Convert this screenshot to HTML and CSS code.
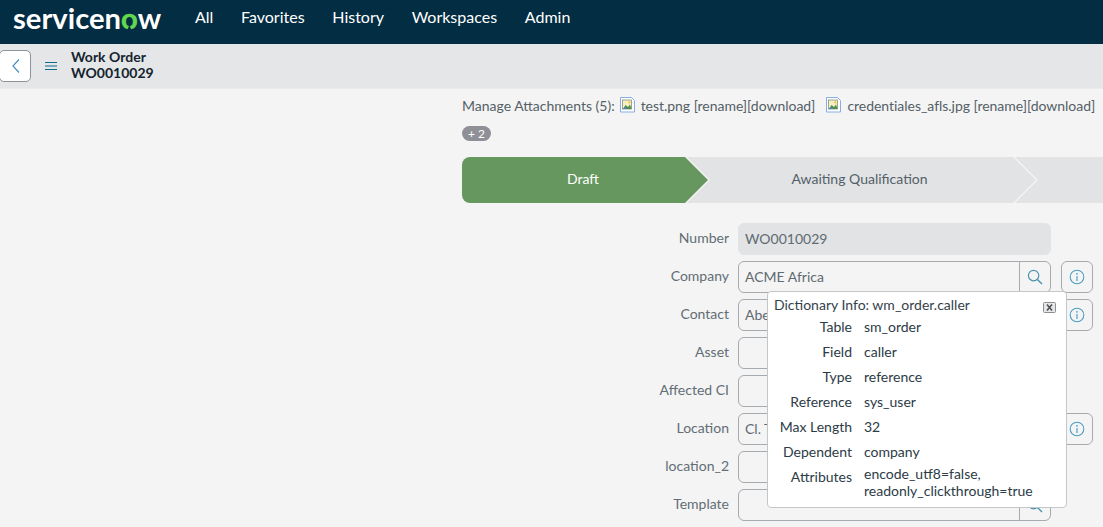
FILE: index.html
```html
<!DOCTYPE html>
<html lang="en">
<head>
<meta charset="utf-8">
<title>Work Order WO0010029</title>
<link rel="stylesheet" href="styles.css">
</head>
<body>
<svg class="defs" width="0" height="0" aria-hidden="true">
  <symbol id="i-search" viewBox="0 0 16 16"><circle cx="6.6" cy="6.6" r="5.2" fill="none" stroke="currentColor" stroke-width="1.2"/><path d="M10.4 10.4 15 15" fill="none" stroke="currentColor" stroke-width="1.4"/></symbol>
  <symbol id="i-info" viewBox="0 0 16 16"><circle cx="8" cy="8" r="6.8" fill="none" stroke="currentColor" stroke-width="1.1"/><path d="M8 7v5" stroke="currentColor" stroke-width="1.2"/><circle cx="8" cy="4.8" r=".9" fill="currentColor"/></symbol>
  <symbol id="i-file" viewBox="0 0 16 16"><path d="M.5.500h11l3 3v11.500h-14z" fill="#fff" stroke="#86aee4"/><rect x="2.500" y="3" width="9" height="9" fill="#f6efc4" stroke="#76806a" stroke-width=".7"/><path d="M3 12l2.500-4 2.500 2 2-2.500 1.500 4.500z" fill="#4f8f4a"/><path d="M3 12l2-2 3 2z" fill="#4f7fc0"/><circle cx="9.300" cy="5.300" r="1.100" fill="#e8c23c"/></symbol>
</svg>

<header class="topbar">
  <div class="logo">servicen<span class="logo-o">o</span>w</div>
  <nav class="nav">
    <span>All</span>
    <span>Favorites</span>
    <span>History</span>
    <span>Workspaces</span>
    <span>Admin</span>
  </nav>
</header>

<div class="subbar">
  <button class="back" type="button" aria-label="Back">
    <svg width="8" height="14" viewBox="0 0 8 14"><path d="M7 .5.900 7 7 13.500" fill="none" stroke="#3d8fbc" stroke-width="1.100"/></svg>
  </button>
  <svg class="burger" width="12" height="8" viewBox="0 0 12 8"><path d="M0 .5h12M0 4h12M0 7.500h12" stroke="#0f6d8c" stroke-width="1"/></svg>
  <div class="title">
    <div>Work Order</div>
    <div>WO0010029</div>
  </div>
</div>

<main class="content">
  <div class="attachments">
    <span>Manage Attachments (5):</span>
    <svg class="file" width="16" height="16"><use href="#i-file"/></svg>
    <span class="file-name">test.png [rename][download]</span>
    <svg class="file file-2" width="16" height="16"><use href="#i-file"/></svg>
    <span class="file-name">credentiales_afls.jpg [rename][download]</span>
  </div>
  <div class="more"><span class="pill">+ 2</span></div>

  <div class="stepper">
    <div class="step step-first">Draft</div>
    <div class="step step-mid">Awaiting Qualification</div>
    <div class="step step-last"></div>
  </div>

  <form class="form">
    <div class="row">
      <label class="label">Number</label>
      <div class="field field-ro">WO0010029</div>
    </div>
    <div class="row">
      <label class="label">Company</label>
      <div class="field"><span class="value">ACME Africa</span><span class="search"><svg width="16" height="16"><use href="#i-search"/></svg></span></div>
      <span class="info"><svg width="16" height="16"><use href="#i-info"/></svg></span>
    </div>
    <div class="row">
      <label class="label">Contact</label>
      <div class="field"><span class="value">Abel Tuter</span><span class="search"><svg width="16" height="16"><use href="#i-search"/></svg></span></div>
      <span class="info"><svg width="16" height="16"><use href="#i-info"/></svg></span>
    </div>
    <div class="row">
      <label class="label">Asset</label>
      <div class="field"><span class="value"></span><span class="search"><svg width="16" height="16"><use href="#i-search"/></svg></span></div>
    </div>
    <div class="row">
      <label class="label">Affected CI</label>
      <div class="field"><span class="value"></span><span class="search"><svg width="16" height="16"><use href="#i-search"/></svg></span></div>
    </div>
    <div class="row">
      <label class="label">Location</label>
      <div class="field"><span class="value">Cl. Tarragona</span><span class="search"><svg width="16" height="16"><use href="#i-search"/></svg></span></div>
      <span class="info"><svg width="16" height="16"><use href="#i-info"/></svg></span>
    </div>
    <div class="row">
      <label class="label">location_2</label>
      <div class="field"><span class="value"></span><span class="search"><svg width="16" height="16"><use href="#i-search"/></svg></span></div>
    </div>
    <div class="row">
      <label class="label">Template</label>
      <div class="field"><span class="value"></span><span class="search"><svg width="16" height="16"><use href="#i-search"/></svg></span></div>
    </div>
  </form>
</main>

<aside class="popup">
  <div class="popup-head">
    <span>Dictionary Info: wm_order.caller</span>
    <svg class="popup-close" width="13" height="11" viewBox="0 0 13 11"><rect x=".5" y=".5" width="12" height="10" rx="1" fill="#e6e6e6" stroke="#8a8f94"/><path d="M4 2.500l5 6M9 2.500l-5 6" stroke="#4b5358" stroke-width="1.600"/></svg>
  </div>
  <dl class="dict">
    <dt>Table</dt><dd>sm_order</dd>
    <dt>Field</dt><dd>caller</dd>
    <dt>Type</dt><dd>reference</dd>
    <dt>Reference</dt><dd>sys_user</dd>
    <dt>Max Length</dt><dd>32</dd>
    <dt>Dependent</dt><dd>company</dd>
    <dt>Attributes</dt><dd class="dd-wrap">encode_utf8=false,<br>readonly_clickthrough=true</dd>
  </dl>
</aside>
</body>
</html>
```
FILE: styles.css
```css
* { box-sizing: border-box; }
html, body { height: 100%; overflow: hidden; }
body {
  margin: 0;
  background: #f4f4f4;
  font-family: Lato, "Liberation Sans", sans-serif;
  font-size: 14px;
  color: #545f67;
}
.defs { position: absolute; }

.topbar {
  height: 44px;
  background: #032d42;
  display: flex;
  align-items: center;
  color: #fff;
}
.logo {
  width: 195px;
  padding-left: 13px;
  font-weight: 700;
  font-size: 29.2px;
  line-height: 34px;
  margin-top: -8px;
}
.logo-o {
  position: relative;
  color: #62d84e;
  -webkit-text-stroke: .5px #62d84e;
}
.logo-o::after {
  content: "";
  position: absolute;
  left: 50%;
  bottom: 5px;
  width: 4px;
  height: 5px;
  margin-left: -2px;
  background: #032d42;
  clip-path: polygon(50% 0, 100% 100%, 0 100%);
}
.nav {
  display: flex;
  gap: 27.7px;
  font-size: 16px;
  margin-top: -12px;
}

.subbar {
  height: 45px;
  background: #e4e6e7;
  display: flex;
  align-items: center;
  border-bottom: 1px solid #e9eaeb;
}
.back {
  width: 32px;
  height: 32px;
  margin-left: -1px;
  padding: 0 0 0 2px;
  background: #fff;
  border: 1px solid #8d9499;
  border-radius: 5px;
  display: flex;
  align-items: center;
  justify-content: center;
}
.burger { margin-left: 14px; }
.title {
  margin-left: 14px;
  margin-top: -2px;
  font-size: 14px;
  font-weight: 700;
  line-height: 16px;
  color: #14232e;
}

.content { margin-left: 462px; }
.attachments {
  height: 20px;
  margin-top: 6px;
  display: flex;
  align-items: center;
  white-space: nowrap;
}
.file { margin: 0 5px 0 5px; flex: none; }
.file-2 { margin-left: 11px; }
.file-name { letter-spacing: -.03px; }
.more { margin-top: 11px; height: 15px; display: flex; }
.pill {
  width: 29px;
  height: 15px;
  border-radius: 8px;
  background: #8f9097;
  color: #fff;
  font-size: 12px;
  line-height: 15px;
  text-align: center;
}

.stepper {
  margin-top: 16px;
  height: 46px;
  display: flex;
  overflow: hidden;
}
.step {
  display: flex;
  align-items: center;
  justify-content: center;
  background: #e1e3e5;
  flex: none;
  padding-bottom: 4px;
}
.step-first {
  width: 246px;
  padding-right: 4px;
  background: #66975f;
  color: #fff;
  border-radius: 8px 0 0 8px;
  clip-path: polygon(0 0, calc(100% - 23px) 0, 100% 50%, calc(100% - 23px) 100%, 0 100%);
}
.step-mid {
  width: 349px;
  margin-left: -21px;
  padding-right: 4px;
  clip-path: polygon(0 0, calc(100% - 23px) 0, 100% 50%, calc(100% - 23px) 100%, 0 100%, 23px 50%);
}
.step-last {
  flex: 1;
  margin-left: -21px;
  clip-path: polygon(0 0, 100% 0, 100% 100%, 0 100%, 23px 50%);
}

.form {
  margin-top: 20px;
  display: flex;
  flex-direction: column;
  gap: 6px;
}
.row {
  height: 32px;
  display: flex;
  align-items: center;
}
.label {
  width: 267px;
  margin-right: 9px;
  padding-bottom: 3px;
  text-align: right;
  color: #626d75;
}
.field {
  width: 313px;
  height: 32px;
  border: 1px solid #a6abaf;
  border-radius: 6px;
  display: flex;
  align-items: stretch;
  color: #5f6a72;
}
.field-ro {
  background: #e1e3e5;
  border-color: #e1e3e5;
  padding-left: 6px;
  padding-bottom: 2px;
  align-items: center;
}
.value { flex: 1; padding-left: 6px; line-height: 29px; }
.search {
  width: 31px;
  border-left: 1px solid #a6abaf;
  display: flex;
  align-items: center;
  justify-content: center;
  color: #4d93b0;
}
.info {
  width: 32px;
  height: 32px;
  margin-left: 10px;
  border: 1px solid #a6abaf;
  border-radius: 6px;
  display: flex;
  align-items: center;
  justify-content: center;
  color: #4d9fc4;
}

.popup {
  position: absolute;
  left: 767px;
  top: 291px;
  width: 300px;
  height: 217px;
  background: #fff;
  border: 1px solid #c4c7ca;
  border-radius: 4px;
  padding: 3px 10px 0 6px;
  color: #2c3b46;
}
.popup-head {
  display: flex;
  justify-content: space-between;
  align-items: center;
  height: 18px;
  color: #34424c;
}
.popup-close { margin-top: 7px; }
.dict {
  margin: 5px 0 0;
  display: grid;
  grid-template-columns: 78px 1fr;
  column-gap: 12px;
  row-gap: 7px;
  line-height: 18px;
}
.dict dt { text-align: right; }
.dict dd { margin: 0; line-height: 17px; }
.dict .dd-wrap { margin-top: -3px; }
```
